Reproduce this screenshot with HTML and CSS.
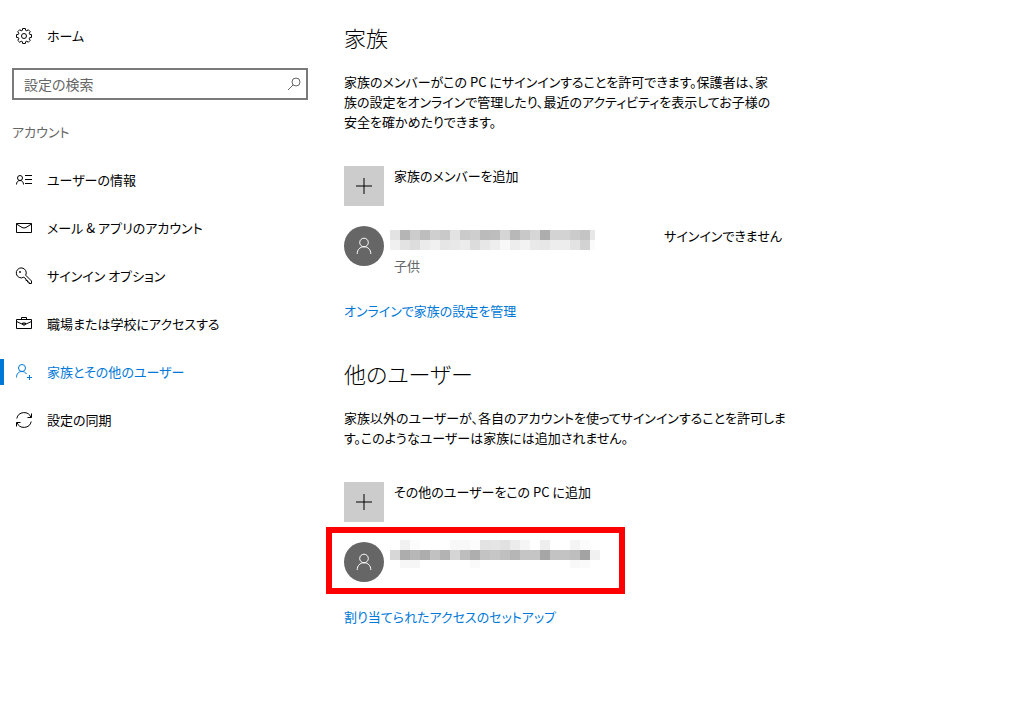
FILE: index.html
```
<!DOCTYPE html>
<html lang="ja">
<head>
    <meta charset="UTF-8">
    <meta name="viewport" content="width=device-width, initial-scale=1.0">
    <title>設定</title>
    <link rel="stylesheet" href="styles.css">
</head>
<body>
    <div class="settings">
        <aside class="sidebar">
            <a class="nav-item home" href="#">
                <svg class="icon" viewBox="-8 -8 16 16"><path d="M-1.45-7.46H1.45L1.63-5.67 2.86-5.16 4.25-6.3 6.3-4.25 5.16-2.86 5.67-1.63 7.46-1.45V1.45L5.67 1.63 5.16 2.86 6.3 4.25 4.25 6.3 2.86 5.16 1.63 5.67 1.45 7.46H-1.45L-1.63 5.67-2.86 5.16-4.25 6.3-6.3 4.25-5.16 2.86-5.67 1.63-7.46 1.45V-1.45L-5.67-1.63-5.16-2.86-6.3-4.25-4.25-6.3-2.86-5.16-1.63-5.67z"/><circle cx="0" cy="0" r="2.5"/></svg>
                <span>ホーム</span>
            </a>
            <form class="search">
                <input class="search-input" type="search" aria-label="設定の検索" placeholder="設定の検索">
                <button class="search-button" type="button" aria-label="検索">
                    <svg class="search-icon" viewBox="0 0 14 14"><circle cx="9" cy="5" r="4"/><path d="M6.200 7.800 1 13"/></svg>
                </button>
            </form>
            <h2 class="category">アカウント</h2>
            <nav class="nav">
                <a class="nav-item" href="#">
                    <svg class="icon" viewBox="0 0 16 16"><circle cx="4" cy="6" r="2.500"/><path d="M.5 12.500C.5 10 2 8.500 4 8.500s3.500 1.500 3.500 4M9 3.500h7M9 7.500h7M9 11.500h7"/></svg>
                    <span>ユーザーの情報</span>
                </a>
                <a class="nav-item" href="#">
                    <svg class="icon" viewBox="0 0 16 16"><path d="M.5 3.500h15v9H.5zM.5 4 6 7.500Q8 8.500 10 7.500L15.500 4"/></svg>
                    <span>メール &amp; アプリのアカウント</span>
                </a>
                <a class="nav-item" href="#">
                    <svg class="icon" viewBox="0 0 16 16"><path d="M9.700 7.200 15.500 13v2.500H13V14h-1.500v-1.500H10V11L7.800 9.200A5 5 0 1 1 9.700 7.200z"/><circle cx="4" cy="4" r=".6"/></svg>
                    <span>サインイン オプション</span>
                </a>
                <a class="nav-item" href="#">
                    <svg class="icon" viewBox="0 0 16 16"><path d="M.5 3.500h15v9H.5zM5.500 3.500v-2h5v2M.5 5.500 6 8h4l5.500-2.500M6.500 7v1.500q1.500 1.500 3 0V7z"/></svg>
                    <span>職場または学校にアクセスする</span>
                </a>
                <a class="nav-item active" href="#" aria-current="page">
                    <svg class="icon" viewBox="0 0 16 16"><circle cx="6" cy="4" r="3.500"/><path d="M.5 13.500C.5 10 2.500 7.500 6 7.500c2 0 3.500 1 4.500 2.500M13.500 11v5M11 13.500h5"/></svg>
                    <span>家族とその他のユーザー</span>
                </a>
                <a class="nav-item" href="#">
                    <svg class="icon" viewBox="0 0 16 16"><path d="M.8 6.500A7.400 7.400 0 0 1 15 5.500M15.500 1.500v4h-4M15.200 9.500A7.400 7.400 0 0 1 1 10.500M.5 14.500v-4h4"/></svg>
                    <span>設定の同期</span>
                </a>
            </nav>
        </aside>

        <main class="content">
            <section class="section">
                <h1>家族</h1>
                <p>家族のメンバーがこの PC にサインインすることを許可できます。保護者は、家<br>族の設定をオンラインで管理したり、最近のアクティビティを表示してお子様の<br>安全を確かめたりできます。</p>
                <button class="row" type="button">
                    <span class="add"><svg class="icon" viewBox="0 0 16 16"><path d="M8 0v16M0 8h16"/></svg></span>
                    <span class="label">家族のメンバーを追加</span>
                </button>
                <div class="row">
                    <span class="avatar"><svg class="icon" viewBox="0 0 16 16"><circle cx="8" cy="4.500" r="4.300"/><path d="M1.200 16C1.200 11.500 4 8.800 8 8.800s6.800 2.700 6.800 7.200"/></svg></span>
                    <div class="user">
                        <svg class="mosaic" id="familyName" width="210" height="20"></svg>
                        <span class="role">子供</span>
                    </div>
                    <span class="status">サインインできません</span>
                </div>
                <a class="link" href="#">オンラインで家族の設定を管理</a>
            </section>

            <section class="section">
                <h1>他のユーザー</h1>
                <p>家族以外のユーザーが、各自のアカウントを使ってサインインすることを許可しま<br>す。このようなユーザーは家族には追加されません。</p>
                <button class="row" type="button">
                    <span class="add"><svg class="icon" viewBox="0 0 16 16"><path d="M8 0v16M0 8h16"/></svg></span>
                    <span class="label">その他のユーザーをこの PC に追加</span>
                </button>
                <div class="row highlight">
                    <span class="avatar"><svg class="icon" viewBox="0 0 16 16"><circle cx="8" cy="4.500" r="4.300"/><path d="M1.200 16C1.200 11.500 4 8.800 8 8.800s6.800 2.700 6.800 7.200"/></svg></span>
                    <div class="user other">
                        <svg class="mosaic" id="otherName" width="210" height="28"></svg>
                    </div>
                </div>
                <a class="link" href="#">割り当てられたアクセスのセットアップ</a>
            </section>
        </main>
    </div>

    <script>
        // Grey level of each 10px block, one string per row
        const familyRows = [
            'e3 b5 cc bd cf c9 e3 cb ce bb bd d5 b8 c8 d6 ad d3 d3 cb c4 e7',
            'f0 e3 dd eb f0 e6 e8 ec dc e7 ee f8 ed f2 e9 e7 ed ed e3 d2 fb'
        ];
        const otherRows = [
            'ff f1 fc ff ff ff f8 f8 fc e3 e5 e1 ec f5 ff ee ff ff f4 fb ff',
            'd7 ad b7 ad c1 b3 d5 bd ae c3 c6 c0 b6 c5 c5 a6 c3 c3 be a3 f1',
            'ff f7 f6 ff ff ff ff ff fa ff ff ff ff ff ff ff ff ff f8 fa ff'
        ];

        function drawMosaic(id, rows, lastWidth) {
            const svg = document.getElementById(id);
            rows.forEach((row, y) => {
                const cells = row.split(' ');
                cells.forEach((grey, x) => {
                    const rect = document.createElementNS('http://www.w3.org/2000/svg', 'rect');
                    rect.setAttribute('x', x * 10);
                    rect.setAttribute('y', y * 10);
                    rect.setAttribute('width', x === cells.length - 1 ? lastWidth : 10);
                    rect.setAttribute('height', 10);
                    rect.setAttribute('fill', '#' + grey + grey + grey);
                    svg.appendChild(rect);
                });
            });
        }

        drawMosaic('familyName', familyRows, 5);
        drawMosaic('otherName', otherRows, 10);
    </script>
</body>
</html>
```
FILE: styles.css
```
*,
*::after {
    box-sizing: border-box;
}

body {
    margin: 0;
    background: #fff;
    color: #000;
    font-family: "Noto Sans CJK JP", sans-serif;
    font-size: 13px;
    font-weight: 400;
    line-height: 20px;
    font-feature-settings: "palt";
}

input,
button {
    font: inherit;
    font-feature-settings: inherit;
    color: inherit;
}

.settings {
    display: flex;
    min-height: 100vh;
}

.sidebar {
    flex: 0 0 320px;
    padding-top: 12px;
}

.nav-item {
    display: flex;
    align-items: center;
    gap: 15px;
    height: 48px;
    padding-left: 12px;
    border-left: 4px solid transparent;
    color: #000;
    text-decoration: none;
}

.nav-item.active {
    color: #0078d7;
    border-image: linear-gradient(transparent 25%, #0078d7 25%, #0078d7 75%, transparent 75%) 1;
    border-image-width: 0 0 0 4px;
}

.icon {
    flex: none;
    width: 16px;
    height: 16px;
    fill: none;
    stroke: currentColor;
    stroke-width: 1;
    overflow: visible;
}

.search {
    display: flex;
    height: 32px;
    margin: 8px 12px 0;
    border: 2px solid #7a7a7a;
}

.search-input {
    flex: 1;
    min-width: 0;
    padding: 0 10px;
    border: none;
    outline: none;
    background: none;
    font-size: 14px;
}

.search-input::placeholder {
    color: #666;
    opacity: 1;
}

.search-button {
    display: flex;
    align-items: center;
    padding: 0 5px;
    border: none;
    background: none;
}

.search-icon {
    width: 14px;
    height: 14px;
    fill: none;
    stroke: #666;
}

.category {
    margin: 22px 12px 14px;
    color: #666;
    font-size: 13px;
    font-weight: 400;
}

.content {
    flex: 1;
    padding: 21px 24px;
}

.section {
    max-width: 456px;
    margin-bottom: 36px;
}

h1 {
    margin: 0 0 19px;
    font-size: 22px;
    font-weight: 300;
    line-height: 32px;
}

p {
    margin: 0 0 34px;
    white-space: nowrap;
}

.row {
    display: flex;
    position: relative;
    width: 100%;
    margin-bottom: 20px;
    padding: 0;
    border: none;
    background: none;
    text-align: left;
}

.add,
.avatar {
    display: flex;
    flex: none;
    align-items: center;
    justify-content: center;
    width: 40px;
    height: 40px;
    background: #ccc;
}

.avatar {
    border-radius: 50%;
    background: #666;
    color: #fff;
}

.label {
    margin-left: 10px;
}

.user {
    display: flex;
    flex-direction: column;
    margin-left: 6px;
    padding-top: 4px;
}

.user.other {
    padding-top: 0;
    margin-top: -2px;
}

.mosaic {
    display: block;
    shape-rendering: crispEdges;
}

.role {
    margin: 6px 0 0 4px;
    color: #666;
}

.status {
    margin: 0 18px 0 auto;
}

/* Red frame around the selected account */
.highlight::after {
    content: "";
    position: absolute;
    top: -15px;
    left: -18px;
    width: 299px;
    height: 67px;
    border: 6px solid #f00;
    pointer-events: none;
}

.link {
    display: block;
    width: fit-content;
    margin-top: 25px;
    color: #0078d7;
    text-decoration: none;
}
```
